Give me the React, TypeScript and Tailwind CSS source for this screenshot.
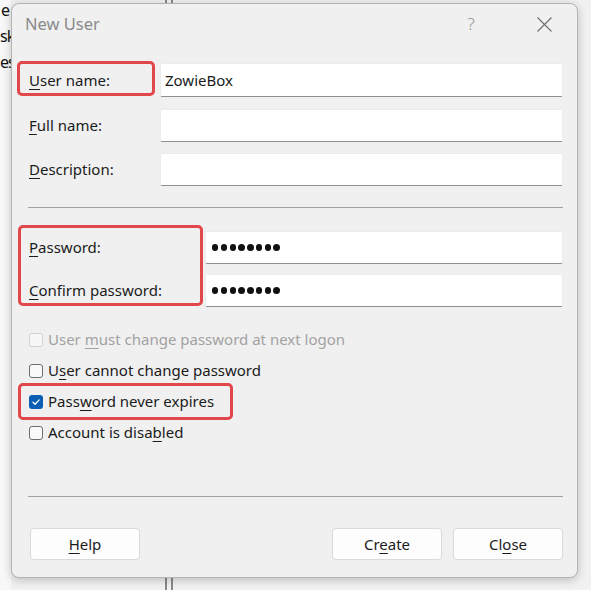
import React from 'react';

const font = { fontFamily: '"Noto Sans", "Open Sans", Arial, sans-serif' };

const Field: React.FC<{ label: React.ReactNode; value?: string; h: string }> = ({ label, value, h }) => (
  <div className={`flex items-center ${h}`}>
    <div className="w-[132px] pl-[1px] text-[15px] text-[#1b1b1b]">{label}</div>
    <div className={`flex-1 ${h} bg-white border border-[#ececec] border-b-[#8f8f8f] rounded-[2px] flex items-center pl-[4px] text-[15px] text-[#1b1b1b]`}>
      {value}
    </div>
  </div>
);

const Dots: React.FC = () => (
  <div className="flex gap-[2.4px] pl-[6px]">
    {Array.from({ length: 8 }).map((_, i) => (
      <span key={i} className="w-[6.4px] h-[6.4px] rounded-full bg-[#111]" />
    ))}
  </div>
);

const Check: React.FC<{ state: 'off' | 'on' | 'disabled'; children: React.ReactNode }> = ({ state, children }) => (
  <div className="flex items-center h-[31px] pl-[1px]">
    {state === 'on' ? (
      <span className="w-[14px] h-[14px] rounded-[3px] bg-[#0a5fb4] flex items-center justify-center">
        <svg width="10" height="10" viewBox="0 0 10 10" fill="none">
          <path d="M2 5.2 L4.1 7.2 L8.2 2.9" stroke="white" strokeWidth="1.3" strokeLinecap="round" strokeLinejoin="round" />
        </svg>
      </span>
    ) : (
      <span
        className={`w-[14px] h-[14px] rounded-[3px] border ${
          state === 'disabled' ? 'border-[#d2d2d2] bg-[#f6f6f6]' : 'border-[#6e6e6e] bg-[#f9f9f9]'
        }`}
      />
    )}
    <span className={`ml-[5px] text-[15px] ${state === 'disabled' ? 'text-[#a2a2a2]' : 'text-[#1b1b1b]'}`}>{children}</span>
  </div>
);

const Btn: React.FC<{ children: React.ReactNode; className?: string }> = ({ children, className }) => (
  <button className={`w-[110px] h-[32px] bg-[#fdfdfd] border border-[#dadada] rounded-[4px] text-[15px] text-[#1b1b1b] ${className ?? ''}`}>
    {children}
  </button>
);

const u = (c: string) => <u className="underline-offset-[3px] decoration-1">{c}</u>;

const App: React.FC = () => {
  return (
    <div className="relative w-[591px] h-[590px] bg-[#f1f1f1] overflow-hidden flex" style={font}>
      {/* window behind */}
      <div className="absolute left-[165px] top-0 w-[8px] h-full border-x-2 border-[#8a8a8a]" />
      <div className="w-[11px] bg-[#f8f8f8] flex flex-col items-start text-[16px] tracking-[-1px] text-[#111] leading-none pt-[2px] gap-[10px]">
        <span className="pl-[1px]">e</span>
        <span>sk</span>
        <span>es</span>
      </div>

      {/* dialog */}
      <div className="relative mt-[3px] w-[567px] h-[575px] bg-[#f0f0f0] border border-[#b3b3b3] rounded-[8px] shadow-[0_2px_10px_rgba(0,0,0,0.22)] flex flex-col">
        {/* title bar */}
        <div className="h-[40px] flex items-center pl-[13px] pr-[25px]">
          <div className="flex-1 text-[16.5px] text-[#8a8a8a]">New User</div>
          <span className="w-[16px] text-center text-[17px] text-[#8f8f8f] font-light">?</span>
          <svg className="ml-[58px]" width="15" height="15" viewBox="0 0 15 15">
            <path d="M0.5 0.5 L14.5 14.5 M14.5 0.5 L0.5 14.5" stroke="#6d6d6d" strokeWidth="1.1" />
          </svg>
        </div>

        <div className="flex flex-col pl-[16px] pr-[14px]">
          {/* names */}
          <div className="relative mt-[19px]">
            <Field h="h-[34px]" label={<>{u('U')}ser name:</>} value="ZowieBox" />
            <div className="absolute left-[-11px] top-[-2px] w-[138px] h-[35px] border-[3px] border-[#e2474b] rounded-[5px]" />
          </div>
          <div className="mt-[12px]">
            <Field h="h-[33px]" label={<>{u('F')}ull name:</>} />
          </div>
          <div className="mt-[11px]">
            <Field h="h-[33px]" label={<>{u('D')}escription:</>} />
          </div>

          <div className="mt-[21px] h-px bg-[#a0a0a0]" />

          {/* passwords */}
          <div className="relative mt-[23px] flex flex-col gap-[10px]">
            {[
              { label: <>{u('P')}assword:</>, h: 'h-[33px]' },
              { label: <>{u('C')}onfirm password:</>, h: 'h-[33px]' },
            ].map((r, i) => (
              <div key={i} className={`flex items-center ${r.h}`}>
                <div className="w-[177px] pl-[1px] text-[15px] text-[#1b1b1b]">{r.label}</div>
                <div className={`flex-1 ${r.h} bg-white border border-[#ececec] border-b-[#8f8f8f] rounded-[2px] flex items-center`}>
                  <Dots />
                </div>
              </div>
            ))}
            <div className="absolute left-[-10px] top-[-6px] w-[185px] h-[81px] border-[3px] border-[#e2474b] rounded-[5px]" />
          </div>

          {/* options */}
          <div className="mt-[17px] flex flex-col">
            <Check state="disabled">User {u('m')}ust change password at next logon</Check>
            <Check state="off">U{u('s')}er cannot change password</Check>
            <div className="relative">
              <Check state="on">Pass{u('w')}ord never expires</Check>
              <div className="absolute left-[-10px] top-[-3px] w-[215px] h-[37px] border-[3px] border-[#e2474b] rounded-[5px]" />
            </div>
            <Check state="off">Account is disa{u('b')}led</Check>
          </div>

          <div className="mt-[48px] h-px bg-[#a0a0a0]" />

          {/* buttons */}
          <div className="mt-[31px] flex items-center">
            <Btn className="ml-[2px] w-[109px]">{u('H')}elp</Btn>
            <div className="flex-1" />
            <Btn>Cr{u('e')}ate</Btn>
            <Btn className="ml-[11px]">Cl{u('o')}se</Btn>
          </div>
        </div>
      </div>
    </div>
  );
};

export default App;
